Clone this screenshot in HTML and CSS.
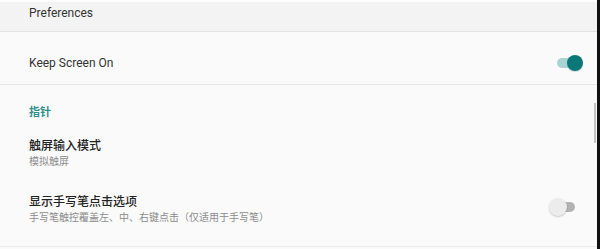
FILE: index.html
```html
<!DOCTYPE html>
<html lang="zh-CN">
<head>
<meta charset="utf-8">
<title>Preferences</title>
<link rel="stylesheet" href="styles.css">
</head>
<body>
<div class="screen">
  <main class="page">
    <header class="toolbar"><span class="toolbar-title">Preferences</span></header>
    <div class="row row-switch">
      <span class="row-title-en">Keep Screen On</span>
      <span class="switch switch-on"><span class="track"></span><span class="thumb"></span></span>
    </div>
    <div class="category">指针</div>
    <div class="item">
      <div class="item-text">
        <div class="item-title">触屏输入模式</div>
        <div class="item-summary">模拟触屏</div>
      </div>
    </div>
    <div class="item item-last">
      <div class="item-text">
        <div class="item-title">显示手写笔点击选项</div>
        <div class="item-summary">手写笔触控覆盖左、中、右键点击（仅适用于手写笔）</div>
      </div>
      <span class="switch switch-off"><span class="track"></span><span class="thumb"></span></span>
    </div>
    <div class="scrollbar"></div>
  </main>
  <div class="edge"></div>
</div>
</body>
</html>
```

FILE: styles.css
```css
* { box-sizing: border-box; }
html, body { margin: 0; padding: 0; }
body {
  width: 600px;
  height: 249px;
  overflow: hidden;
  background: #fafafa;
  font-family: Roboto, "Noto Sans CJK SC", sans-serif;
}
.screen {
  display: flex;
  height: 249px;
}
.page {
  position: relative;
  flex: 1;
  background: #fafafa;
  display: flex;
  flex-direction: column;
}
.edge {
  width: 3px;
  background: #111;
}
.toolbar {
  height: 32px;
  background: #f3f3f3;
  border-top: 2px solid #fdfdfd;
  border-bottom: 1px solid #e2e2e2;
  padding-left: 29px;
  display: flex;
  align-items: center;
}
.toolbar-title {
  font-size: 12px;
  color: #333;
  margin-top: -8px;
}
.row {
  height: 53px;
  border-bottom: 1px solid #e6e6e6;
  padding: 10px 0 0 29px;
  display: flex;
  align-items: center;
  justify-content: space-between;
}
.row-title-en {
  font-size: 12px;
  color: #333;
}
.category {
  height: 40px;
  padding: 21px 0 0 29px;
  font-size: 11px;
  line-height: 14px;
  font-weight: 700;
  color: #2f8e8b;
}
.item {
  height: 55px;
  padding: 13px 0 0 29px;
  display: flex;
  align-items: flex-start;
  justify-content: space-between;
}
.item-last {
  height: 67px;
  padding-top: 14px;
  border-bottom: 1px solid #ececec;
}
.item-text {
  display: flex;
  flex-direction: column;
}
.item-title {
  font-size: 12px;
  line-height: 16px;
  font-weight: 500;
  color: #222;
}
.item-summary {
  font-size: 10px;
  line-height: 15px;
  color: #8c8c8c;
}
.switch {
  position: relative;
  width: 28px;
  height: 16px;
  flex: none;
}
.switch .track {
  position: absolute;
  left: 2px;
  top: 3px;
  width: 24px;
  height: 10px;
  border-radius: 5px;
}
.switch .thumb {
  position: absolute;
  top: 0;
  width: 16px;
  height: 16px;
  border-radius: 50%;
}
.switch-on { margin-right: 14px; }
.switch-on .track { background: #a8d4d3; }
.switch-on .thumb {
  right: 0;
  background: #0b7877;
  box-shadow: 0 1px 1px rgba(0,0,0,0.15);
}
.switch-off {
  margin-right: 20px;
  margin-top: 5px;
}
.switch-off .track { background: #b3b3b3; }
.switch-off .thumb {
  left: 0;
  top: -1px;
  width: 18px;
  height: 18px;
  background: #ececec;
  box-shadow: 0 1px 2px rgba(0,0,0,0.2);
}
.scrollbar {
  position: absolute;
  right: 1px;
  top: 103px;
  width: 2px;
  height: 40px;
  background: #c4c4c4;
}
```
